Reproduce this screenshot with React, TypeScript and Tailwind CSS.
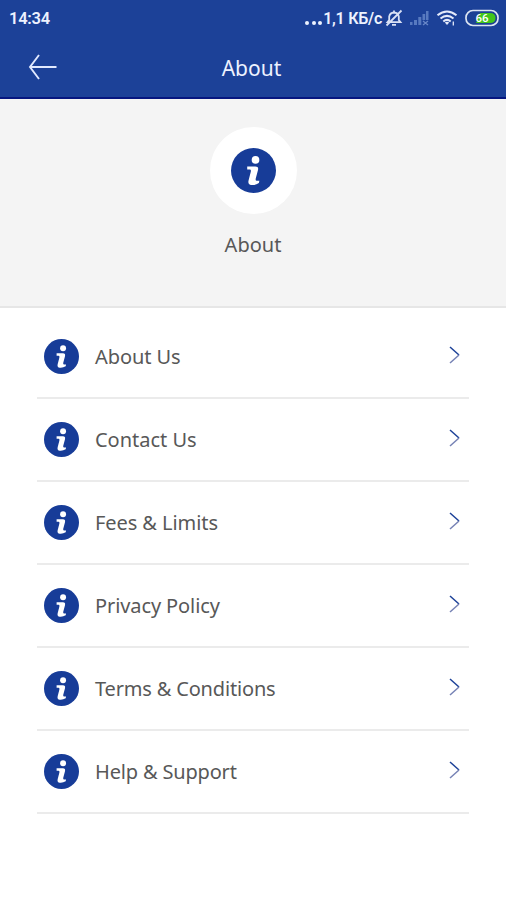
const items = [
  { label: 'About Us', tracking: 'tracking-[-0.08px]' },
  { label: 'Contact Us', tracking: 'tracking-[-0.02px]' },
  { label: 'Fees & Limits', tracking: 'tracking-[-0.07px]' },
  { label: 'Privacy Policy', tracking: 'tracking-[-0.1px]' },
  { label: 'Terms & Conditions', tracking: 'tracking-[-0.17px]' },
  { label: 'Help & Support', tracking: 'tracking-[-0.17px]' },
];

function InfoIcon({ className }: { className: string }) {
  return (
    <svg viewBox="0 0 100 100" className={className} aria-hidden="true">
      <circle cx="50" cy="50" r="50" fill="#173c98" />
      <circle cx="54.5" cy="26.5" r="8.5" fill="#fff" />
      <path
        d="M36 41 H54 Q62 41 60 49 L55 68 Q54 73 57 73 H63 L62 78 Q54 83 45 82 Q37 81 39 72 L44 53 Q45 48 42 48 H36 Z"
        fill="#fff"
      />
    </svg>
  );
}

function MutedBell() {
  return (
    <svg viewBox="0 0 18 18" className="ml-[3px] h-[18px] w-[18px]" fill="none" stroke="#d9e1f5" strokeWidth="1.8" aria-hidden="true">
      <path d="M2.5 13.2 H15.5 L13.8 11 V7.5 Q13 3.8 9 3.5 Q5 3.8 4.2 7.5 V11 Z M7 15.8 H11 M9 3.5 V1.5 M1.5 16.5 L16.5 1.5" />
    </svg>
  );
}

function Signal() {
  return (
    <svg viewBox="0 0 20 16" className="ml-[6px] h-4 w-5" aria-hidden="true">
      <path d="M1 12h2.5v3H1z M5 10h3v5H5z M9.3 7H12.3v8H9.3z M13.5 4h2.7v6h-2.7z M17 1h2.5v9H17z" fill="#587ac0" />
      <path d="M14 11 L19 15 M19 11 L14 15" stroke="#6987c8" strokeWidth="1.3" />
    </svg>
  );
}

function Wifi() {
  return (
    <svg viewBox="0 0 22 18" className="ml-[7px] h-[18px] w-[22px]" fill="none" stroke="#e4eafa" strokeWidth="2" aria-hidden="true">
      <path d="M1.5 6.3 Q11 -1.4 20.5 6.3 M4.5 9.6 Q11 4.2 17.5 9.6 M7.3 12.5 Q11 9.3 14.7 12.5" />
      <path d="M8.8 13.5 Q11 12 13.2 13.5 L11 16 Z" fill="#e4eafa" stroke="none" />
      <path d="M17.3 12.5 V16.5" strokeWidth="1.3" />
    </svg>
  );
}

function Battery() {
  return (
    <svg viewBox="0 0 34 18" className="ml-[7px] h-[18px] w-[34px]" aria-hidden="true">
      <rect x="1" y="1.5" width="32" height="15" rx="7" fill="#1b4094" stroke="#dce4f2" strokeWidth="1.7" />
      <path d="M15 4 H25 Q30.5 4 30.5 9 Q30.5 14 25 14 H11 Z" fill="#41c51b" />
      <text x="17" y="13" textAnchor="middle" fill="#fff" fontFamily="Roboto, sans-serif" fontSize="11.5" fontWeight="500">66</text>
    </svg>
  );
}

export default function App() {
  return (
    <div className="flex h-[900px] w-[506px] flex-col overflow-hidden bg-white font-['Noto_Sans','Open_Sans',sans-serif] text-[#585858]">
      <header className="h-[99px] shrink-0 border-b-2 border-[#061680] bg-[#1c4198] text-[#edf2ff]">
        <div className="flex h-9 items-center justify-between pr-[7px] pl-[9px] font-[Roboto,sans-serif]">
          <span className="pt-0.5 text-[16.5px] leading-5 font-semibold tracking-[-0.25px]">14:34</span>
          <div className="flex items-center">
            <span className="mr-px flex gap-[2.5px] pt-[9px]">
              <i className="size-1 rounded-full bg-[#edf2ff]" />
              <i className="size-1 rounded-full bg-[#edf2ff]" />
              <i className="size-1 rounded-full bg-[#edf2ff]" />
            </span>
            <span className="pt-0.5 text-[16px] leading-5 font-semibold tracking-[-0.25px]">1,1 КБ/с</span>
            <MutedBell />
            <Signal />
            <Wifi />
            <Battery />
          </div>
        </div>
        <div className="grid h-[61px] grid-cols-[1fr_auto_1fr] items-center">
          <svg viewBox="0 0 30 28" className="mt-px ml-7 h-7 w-[30px]" fill="none" stroke="#e1e9ff" strokeWidth="1.9" aria-label="Back">
            <path d="M28.5 14 H2 M11 2 L2 14 L11 26" />
          </svg>
          <h1 className="pt-0.5 pr-[3px] text-[21px] leading-7 font-normal">About</h1>
        </div>
      </header>
      <section className="flex h-[209px] shrink-0 flex-col items-center border-b-2 border-[#e6e6e6] bg-[#f4f4f4] pt-7">
        <div className="flex size-[87px] items-center justify-center rounded-full bg-white">
          <InfoIcon className="size-[45px]" />
        </div>
        <h2 className="mt-[17px] text-[20px] leading-7 font-normal">About</h2>
      </section>
      <nav className="mx-[37px] flex flex-col pt-2">
        {items.map(({ label, tracking }) => (
          <a key={label} className="flex h-[83px] items-center border-b-2 border-[#ebebeb] pr-[7px] pl-[7px]">
            <InfoIcon className="size-[35px]" />
            <span className={`ml-4 pt-px text-[20px] leading-7 ${tracking}`}>{label}</span>
            <svg viewBox="0 0 14 20" className="mb-[3px] ml-auto h-5 w-[14px]" fill="none" strokeWidth="1.5" aria-hidden="true">
              <path d="M2 2 L11 10" stroke="#1c4198" />
              <path d="M11 10 L2 18" stroke="#7682b5" />
            </svg>
          </a>
        ))}
      </nav>
    </div>
  );
}
